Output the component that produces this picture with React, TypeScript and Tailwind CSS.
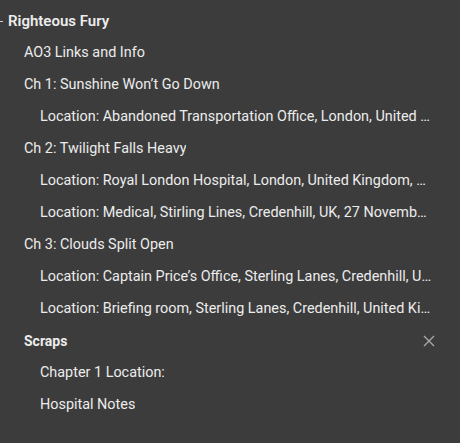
import React from 'react';

type Item = { label: string; level: number; bold?: boolean };

const items: Item[] = [
  { label: 'AO3 Links and Info', level: 1 },
  { label: 'Ch 1: Sunshine Won\u2019t Go Down', level: 1 },
  { label: 'Location: Abandoned Transportation Office, London, United Kingdom, 26 November', level: 2 },
  { label: 'Ch 2: Twilight Falls Heavy', level: 1 },
  { label: 'Location: Royal London Hospital, London, United Kingdom, 27 November', level: 2 },
  { label: 'Location: Medical, Stirling Lines, Credenhill, UK, 27 November 2019', level: 2 },
  { label: 'Ch 3: Clouds Split Open', level: 1 },
  { label: 'Location: Captain Price\u2019s Office, Sterling Lanes, Credenhill, United Kingdom', level: 2 },
  { label: 'Location: Briefing room, Sterling Lanes, Credenhill, United Kingdom', level: 2 },
];

const scraps: string[] = ['Chapter 1 Location:', 'Hospital Notes'];

function Row({ label, level }: Item) {
  return (
    <div className={`flex h-8 items-center pr-7 ${level === 1 ? 'pl-6' : 'pl-10'}`}>
      <span className="truncate text-[14.4px] text-[#ececec]">{label}</span>
    </div>
  );
}

export default function App() {
  return (
    <div
      className="h-[443px] w-[460px] overflow-hidden bg-[#3c3c3c] pt-[5px]"
      style={{ fontFamily: 'Roboto, "Liberation Sans", sans-serif' }}
    >
      {/* Title */}
      <div className="relative flex h-8 items-center pl-2">
        <span className="absolute left-0 top-[16px] h-px w-[3px] bg-[#cfcfcf]" />
        <span className="text-[15px] font-semibold text-[#ececec]">Righteous Fury</span>
      </div>

      {items.map((it, i) => (
        <Row key={i} {...it} />
      ))}

      {/* Scraps section */}
      <div className="flex h-8 items-center justify-between pl-6 pr-[24px]">
        <span className="text-[14px] font-bold text-[#ececec]">Scraps</span>
        <svg width="14" height="14" viewBox="0 0 14 14" className="text-[#a8a8a8]">
          <path d="M2 2 L12 12 M12 2 L2 12" stroke="currentColor" strokeWidth="1.4" fill="none" />
        </svg>
      </div>

      {scraps.map((s, i) => (
        <Row key={i} label={s} level={2} />
      ))}
    </div>
  );
}
